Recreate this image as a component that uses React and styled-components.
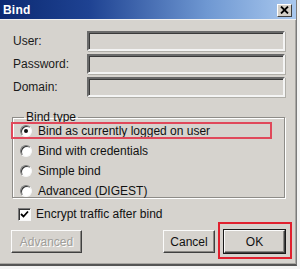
import React from "react";
import styled, { createGlobalStyle, css } from "styled-components";

const Global = createGlobalStyle`
  html, body { margin: 0; padding: 0; background: #f4f4f4; }
  body { font-family: "Liberation Sans", Arial, sans-serif; font-size: 12px; color: #111; }
`;

const Window = styled.div`
  width: 297px;
  height: 266px;
  box-sizing: border-box;
  background: #d6d3ce;
  border-right: 1px solid #7a7a7a;
  border-bottom: 2px solid #555;
  box-shadow: inset -1px -1px 0 #a8a6a2;
  display: flex;
  flex-direction: column;
`;

const TitleBar = styled.div`
  height: 19px;
  flex: none;
  display: flex;
  align-items: center;
  justify-content: space-between;
  padding: 0 4px 0 3px;
  background: linear-gradient(90deg, #0c2a72 0%, #1e4292 30%, #6f98d2 70%, #a9c8ee 100%);
  border-bottom: 1px solid #f0f0f0;
`;

const Title = styled.span`
  color: #fff;
  font-weight: bold;
  font-size: 12px;
  letter-spacing: 0.2px;
`;

const CloseButton = styled.div`
  width: 15px;
  height: 13px;
  box-sizing: border-box;
  background: #d4d0c8;
  border: 1px solid;
  border-color: #fff #404040 #404040 #fff;
  display: flex;
  align-items: center;
  justify-content: center;
  margin-top: 1px;
`;

const Body = styled.div`
  flex: 1;
  display: flex;
  flex-direction: column;
  padding: 11px 11px 0 12px;
`;

const Fields = styled.div`
  display: grid;
  grid-template-columns: 75px 198px;
  row-gap: 3px;
  align-items: center;
`;

const Label = styled.label`
  font-size: 12px;
  color: #1a1a1a;
  padding-left: 1px;
`;

const Input = styled.div`
  height: 20px;
  box-sizing: border-box;
  border: 2px solid;
  border-color: #6a6a6a #f4f4f4 #f4f4f4 #6a6a6a;
  box-shadow: inset 1px 1px 0 #3a3a3a, 1px 1px 0 #b0aea8;
  background: #d6d3ce;
`;

const Group = styled.fieldset`
  margin: 14px 0 0 0;
  width: 273px;
  box-sizing: border-box;
  height: 87px;
  padding: 0 0 0 7px;
  border: 1px solid #8e8c88;
  box-shadow: inset 1px 1px 0 #fff, 1px 1px 0 #fff;
  display: flex;
  flex-direction: column;
  position: relative;
`;

const Legend = styled.legend`
  padding: 0 2px;
  margin-left: 4px;
  font-size: 12px;
  color: #111;
  line-height: 12px;
`;

const RadioRow = styled.div`
  height: 20px;
  display: flex;
  align-items: center;
  gap: 6px;
  position: relative;
  ${(p) => p.$first && css`margin-top: -2px;`}
`;

const Highlight = styled.div`
  position: absolute;
  left: -9px;
  top: 1px;
  width: 261px;
  height: 17px;
  box-sizing: border-box;
  border: 2px solid #e0485a;
  pointer-events: none;
`;

const RadioCircle = styled.span`
  width: 12px;
  height: 12px;
  box-sizing: border-box;
  border-radius: 50%;
  background: #fff;
  border: 1px solid;
  border-color: #7a7a7a #f8f8f8 #f8f8f8 #7a7a7a;
  box-shadow: inset 1px 1px 0 #333;
  display: flex;
  align-items: center;
  justify-content: center;
  flex: none;
  &::after {
    content: "";
    width: 4px;
    height: 4px;
    border-radius: 50%;
    background: ${(p) => (p.$checked ? "#111" : "transparent")};
  }
`;

const CheckRow = styled.div`
  height: 20px;
  margin-top: 6px;
  padding-left: 6px;
  display: flex;
  align-items: center;
  gap: 5px;
`;

const CheckBox = styled.span`
  width: 13px;
  height: 13px;
  box-sizing: border-box;
  background: #fff;
  border: 1px solid;
  border-color: #7a7a7a #f8f8f8 #f8f8f8 #7a7a7a;
  box-shadow: inset 1px 1px 0 #333;
  display: flex;
  align-items: center;
  justify-content: center;
  flex: none;
`;

const Buttons = styled.div`
  display: flex;
  align-items: center;
  height: 23px;
  margin-top: 6px;
  margin-left: -1px;
`;

const Button = styled.div`
  height: 23px;
  box-sizing: border-box;
  width: ${(p) => p.$w}px;
  display: flex;
  align-items: center;
  justify-content: center;
  background: #d6d3ce;
  border: 1px solid;
  border-color: #fbfbfb #404040 #404040 #fbfbfb;
  box-shadow: inset -1px -1px 0 #8a8884;
  font-size: 12px;
  color: ${(p) => (p.$disabled ? "#a09e9a" : "#111")};
  text-shadow: ${(p) => (p.$disabled ? "1px 1px 0 #fff" : "none")};
  ${(p) => p.$default && css`
    outline: 1px solid #1a1a1a;
  `}
`;

const Spacer = styled.div`
  flex: 1;
`;

const Annot = styled.div`
  margin: -8px -7px -6px 3px;
  padding: 6px 5px 4px 4px;
  border: 2px solid #e0202e;
`;

export default function App() {
  return (
    <>
      <Global />
      <Window>
        <TitleBar>
          <Title>Bind</Title>
          <CloseButton>
            <svg width="9" height="8" viewBox="0 0 9 8">
              <path d="M1 0.5 L8 7.5 M8 0.5 L1 7.5" stroke="#000" strokeWidth="1.8" />
            </svg>
          </CloseButton>
        </TitleBar>
        <Body>
          <Fields>
            <Label>User:</Label>
            <Input />
            <Label>Password:</Label>
            <Input />
            <Label>Domain:</Label>
            <Input />
          </Fields>
          <Group>
            <Legend>Bind type</Legend>
            <RadioRow $first>
              <Highlight />
              <RadioCircle $checked />
              <span>Bind as currently logged on user</span>
            </RadioRow>
            <RadioRow>
              <RadioCircle />
              <span>Bind with credentials</span>
            </RadioRow>
            <RadioRow>
              <RadioCircle />
              <span>Simple bind</span>
            </RadioRow>
            <RadioRow>
              <RadioCircle />
              <span>Advanced (DIGEST)</span>
            </RadioRow>
          </Group>
          <CheckRow>
            <CheckBox>
              <svg width="9" height="9" viewBox="0 0 9 9">
                <path d="M1 4 L3.5 6.5 L8 1.5" stroke="#000" strokeWidth="1.8" fill="none" />
              </svg>
            </CheckBox>
            <span>Encrypt traffic after bind</span>
          </CheckRow>
          <Buttons>
            <Button $w={71} $disabled>Advanced</Button>
            <Spacer />
            <Button $w={52}>Cancel</Button>
            <Annot>
              <Button $w={61} $default>OK</Button>
            </Annot>
          </Buttons>
        </Body>
      </Window>
    </>
  );
}
